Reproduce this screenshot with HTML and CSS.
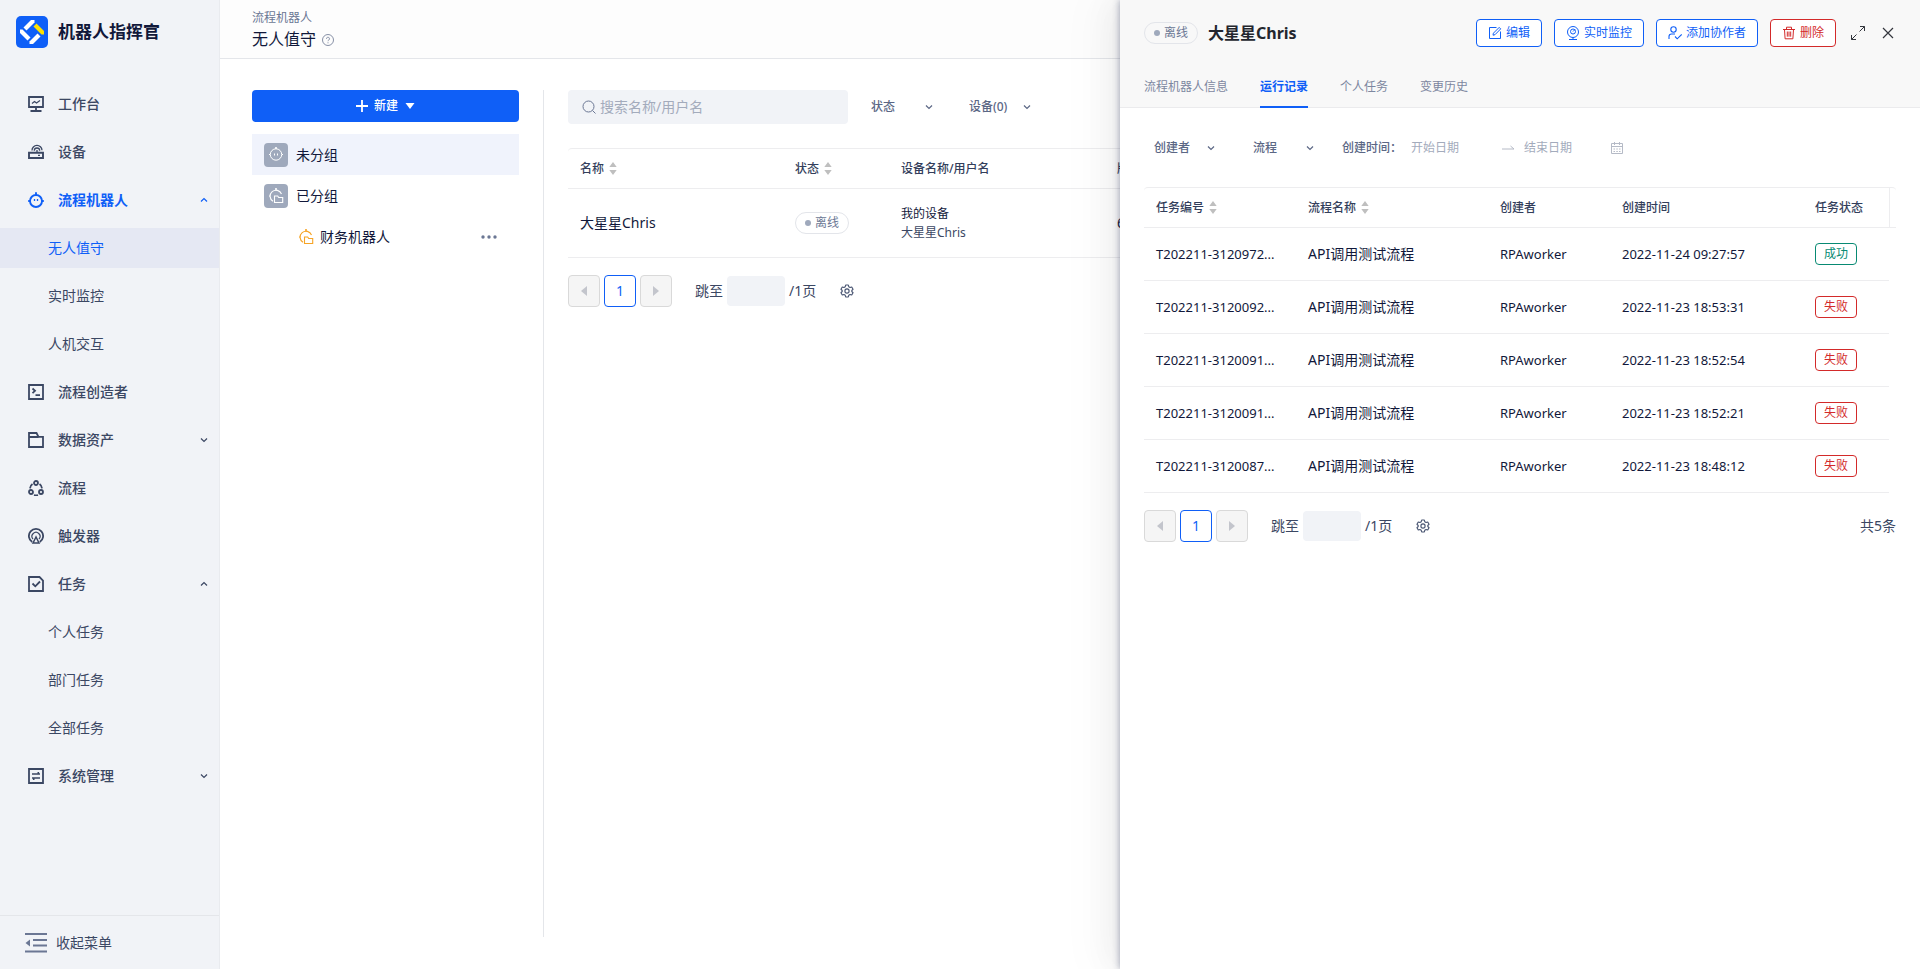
FILE: index.html
```html
<!DOCTYPE html>
<html lang="zh-CN">
<head>
<meta charset="utf-8">
<title>机器人指挥官</title>
<link rel="stylesheet" href="styles.css">
</head>
<body>
<svg class="sprite" aria-hidden="true">
  <symbol id="i-up" viewBox="0 0 8 8"><path d="M1 5.500 4 2.500l3 3" fill="none" stroke="currentColor" stroke-width="1.200"/></symbol>
  <symbol id="i-down" viewBox="0 0 8 8"><path d="M1 2.500l3 3 3-3" fill="none" stroke="currentColor" stroke-width="1.200"/></symbol>
  <symbol id="i-robot" viewBox="0 0 16 16"><g fill="none" stroke="currentColor" stroke-width="1.900"><circle cx="8" cy="9" r="6"/><path d="M8 .2V3M.2 9H2M14 9h1.800"/><path d="M6.500 7v2M9.500 7v2" stroke-width="1.300"/></g></symbol>
  <symbol id="i-robot-thin" viewBox="0 0 16 16"><g fill="none" stroke="currentColor" stroke-width="1"><circle cx="8" cy="7.500" r="5.700"/><path d="M1 7.500h1M14 7.500h1M6.500 6.500v2M9.500 6.500v2"/><path d="M8 0v2" stroke-width="1.600"/></g></symbol>
  <symbol id="i-robot-group" viewBox="0 0 16 16"><g fill="none" stroke="currentColor" stroke-width="1.100"><path d="M5 13.200A5.900 5.900 0 1 1 13.500 6M1 8h1.500"/><path d="M8 0v2.500" stroke-width="1.600"/><path d="M6.500 8h3.200l1 1.500h4v5h-8.200z"/></g></symbol>
  <symbol id="i-sort" viewBox="0 0 8 13"><path d="M4 0l3.700 5H.3zM4 13l3.700-5H.3z" fill="currentColor"/></symbol>
  <symbol id="i-left" viewBox="0 0 8 12"><path d="M7 1v10L1 6z" fill="currentColor"/></symbol>
  <symbol id="i-right" viewBox="0 0 8 12"><path d="M1 1v10l6-5z" fill="currentColor"/></symbol>
  <symbol id="i-gear" viewBox="0 0 16 16"><g fill="none" stroke="currentColor" stroke-width="1.300" stroke-linejoin="round"><path d="M6.500 1.200h3l.5 1.900 1.500.9 1.900-.6 1.500 2.600L13.500 7.400v1.200l1.400 1.400-1.500 2.600-1.900-.6-1.500.9-.5 1.900h-3L6 12.900 4.500 12l-1.900.6L1.100 10l1.400-1.400V7.400L1.100 6l1.500-2.600 1.900.6L6 3.100z"/><circle cx="8" cy="8" r="2.400"/></g></symbol>
</svg>

<div class="app">
  <aside class="sidebar">
    <div class="brand">
      <svg class="brand-logo" viewBox="0 0 32 32"><rect width="32" height="32" rx="5" fill="#0f5ff7"/><g fill="#fff"><path d="M7.500 11.500L15 4h3.500v2.500l-8 8z"/><path d="M20.500 7.500L28 15v3.500h-2.500l-8-8z" fill="#ffe100"/><path d="M24.500 20.500L17 28h-3.500v-2.500l8-8z"/><path d="M11.500 24.500L4 17v-3.500h2.500l8 8z"/></g></svg>
      <span class="brand-name">机器人指挥官</span>
    </div>
    <nav class="menu">
      <a class="item" href="#"><svg class="icon" viewBox="0 0 16 16"><g fill="none" stroke="currentColor" stroke-width="1.800"><path d="M1 1h14v10H1zM8 11v3.500M2.500 15h11"/><path d="M4 7.500l2.500-2L8.500 7 12 4.500" stroke-width="1.200"/></g></svg>工作台</a>
      <a class="item" href="#"><svg class="icon" viewBox="0 0 16 16"><g fill="none" stroke="currentColor"><path d="M1 8.800h14v5.200H1z" stroke-width="1.900"/><path d="M10 11.400h2" stroke-width="1.200"/><path d="M4 6.500a5 5 0 0 1 10-.2M6.300 6.700a2.700 2.700 0 0 1 5.400 0M9 6v2" stroke-width="1.300"/></g></svg>设备</a>
      <a class="item item-on" href="#"><svg class="icon"><use href="#i-robot"/></svg>流程机器人<svg class="fold"><use href="#i-up"/></svg></a>
      <a class="item sub sub-on" href="#">无人值守</a>
      <a class="item sub" href="#">实时监控</a>
      <a class="item sub" href="#">人机交互</a>
      <a class="item" href="#"><svg class="icon" viewBox="0 0 16 16"><g fill="none" stroke="currentColor" stroke-width="1.800"><path d="M1 1h14v14H1zM4.500 4.500l2.500 2.300-2.500 2.300M7.500 11.200H12"/></g></svg>流程创造者</a>
      <a class="item" href="#"><svg class="icon" viewBox="0 0 16 16"><path d="M1 15V1h7.500l2 3.800H15V15zM1 5h9.500" fill="none" stroke="currentColor" stroke-width="1.800"/></svg>数据资产<svg class="fold"><use href="#i-down"/></svg></a>
      <a class="item" href="#"><svg class="icon" viewBox="0 0 16 16"><g fill="none" stroke="currentColor" stroke-width="1.800"><circle cx="8" cy="3" r="2"/><circle cx="3" cy="12" r="2"/><circle cx="13" cy="12" r="2"/><path d="M4.500 4A6 6 0 0 0 2 8.300M11.500 4A6 6 0 0 1 14 8.300M6 15q2 .6 4 0"/></g></svg>流程</a>
      <a class="item" href="#"><svg class="icon" viewBox="0 0 16 16"><g fill="none" stroke="currentColor" stroke-width="1.800"><path d="M4.200 14A7.100 7.100 0 1 1 11.800 14"/><path d="M5 11a4 4 0 1 1 6 0" stroke-width="1.200"/><path d="M8 9l-3 6h6z" stroke-width="1.500"/></g></svg>触发器</a>
      <a class="item" href="#"><svg class="icon" viewBox="0 0 16 16"><path d="M1 1h10.500L15 4.500V15H1zM4.500 7.500l2.800 2.800 4.700-4.800" fill="none" stroke="currentColor" stroke-width="1.800"/></svg>任务<svg class="fold"><use href="#i-up"/></svg></a>
      <a class="item sub" href="#">个人任务</a>
      <a class="item sub" href="#">部门任务</a>
      <a class="item sub" href="#">全部任务</a>
      <a class="item" href="#"><svg class="icon" viewBox="0 0 16 16"><g fill="none" stroke="currentColor" stroke-width="1.800"><path d="M1 1h14v14H1z"/><path d="M4 6h8M4 10h8M10.300 4v2.500M5.700 9.500V12" stroke-width="1.600"/></g></svg>系统管理<svg class="fold"><use href="#i-down"/></svg></a>
    </nav>
    <button class="collapse" type="button"><svg class="collapse-icon" viewBox="0 0 22 20"><path d="M0 1h22M8 7h14M8 12.500h14M0 18.500h22" stroke="currentColor" stroke-width="1.800"/><path d="M5 6.500v7L.5 10z" fill="currentColor"/></svg>收起菜单</button>
  </aside>

  <main class="main">
    <header class="page-head">
      <div class="crumb">流程机器人</div>
      <h1 class="page-title">无人值守<svg class="help" viewBox="0 0 12 12"><g fill="none" stroke="currentColor"><circle cx="6" cy="6" r="5.500"/><path d="M4.500 4.800a1.500 1.500 0 1 1 2.300 1.200Q6 6.400 6 7.200M6 8.300v1"/></g></svg></h1>
    </header>
    <div class="content">
      <section class="groups">
        <button class="create" type="button"><svg class="plus" viewBox="0 0 12 12"><path d="M6 0v12M0 6h12" stroke="currentColor" stroke-width="1.800"/></svg>新建<svg class="caret" viewBox="0 0 10 6"><path d="M.5 0h9L5 6z" fill="currentColor"/></svg></button>
        <ul class="tree">
          <li class="node node-on"><span class="node-icon"><svg><use href="#i-robot-thin"/></svg></span>未分组</li>
          <li class="node"><span class="node-icon"><svg><use href="#i-robot-group"/></svg></span>已分组</li>
          <li class="node node-child"><svg class="folder"><use href="#i-robot-group"/></svg>财务机器人<button class="more" type="button" aria-label="更多"><svg viewBox="0 0 16 4"><g fill="currentColor"><circle cx="2" cy="2" r="1.700"/><circle cx="8" cy="2" r="1.700"/><circle cx="14" cy="2" r="1.700"/></g></svg></button></li>
        </ul>
      </section>
      <section class="list">
        <div class="toolbar">
          <label class="search"><svg viewBox="0 0 14 14"><circle cx="6.500" cy="6.500" r="5.500" fill="none" stroke="currentColor"/><path d="M10.500 10.500l3 3" stroke="currentColor"/></svg><input type="text" placeholder="搜索名称/用户名" aria-label="搜索"></label>
          <div class="pick pick-wide"><select aria-label="状态"><option>状态</option></select><svg><use href="#i-down"/></svg></div>
          <div class="pick pick-wide"><select aria-label="设备"><option>设备(0)</option></select><svg><use href="#i-down"/></svg></div>
        </div>
        <table class="grid robots">
          <colgroup><col class="c-name"><col class="c-state"><col class="c-device"><col></colgroup>
          <thead><tr><th>名称<svg class="sort"><use href="#i-sort"/></svg></th><th>状态<svg class="sort"><use href="#i-sort"/></svg></th><th>设备名称/用户名</th><th>版本</th></tr></thead>
          <tbody><tr><td>大星星Chris</td><td><span class="badge">离线</span></td><td><div class="device">我的设备</div><div class="user">大星星Chris</div></td><td>6.0.0</td></tr></tbody>
        </table>
        <div class="pager">
          <button class="page" type="button" disabled aria-label="上一页"><svg><use href="#i-left"/></svg></button>
          <button class="page page-on" type="button">1</button>
          <button class="page" type="button" disabled aria-label="下一页"><svg><use href="#i-right"/></svg></button>
          <label class="jump">跳至<input type="text" aria-label="页码">/1页</label>
          <button class="gear" type="button" aria-label="设置"><svg><use href="#i-gear"/></svg></button>
        </div>
      </section>
    </div>
  </main>

  <section class="drawer">
    <header class="drawer-head">
      <div class="drawer-bar">
        <span class="badge">离线</span>
        <h2 class="drawer-title">大星星Chris</h2>
        <div class="actions">
          <button class="action" type="button"><svg viewBox="0 0 14 14"><path d="M8.500 1.500h-7v11h11v-7M5 9.200l.4-2L11.200 1.400l1.500 1.500L7 8.700z" fill="none" stroke="currentColor"/></svg>编辑</button>
          <button class="action" type="button"><svg viewBox="0 0 14 14"><g fill="none" stroke="currentColor"><circle cx="7" cy="6" r="5.500"/><circle cx="7" cy="5.500" r="2.500"/><path d="M7 5.500l2-2M7 11.500v2M3 13.500h8"/></g></svg>实时监控</button>
          <button class="action" type="button"><svg viewBox="0 0 14 14"><g fill="none" stroke="currentColor" stroke-width="1.100"><circle cx="5.500" cy="3.500" r="2.700"/><path d="M1 13V10.500q0-2.500 2.500-2.500H7M7 10.500l2.200 2.300L13.700 8.500"/></g></svg>添加协作者</button>
          <button class="action action-danger" type="button"><svg viewBox="0 0 14 14"><path d="M1 3.500h12M4.500 3.300V1.200h5v2.100M2.500 3.500l.6 9.300h7.800l.6-9.300M5.300 5.500v5.200M7 5.500v5.200M8.700 5.500v5.200" fill="none" stroke="currentColor"/></svg>删除</button>
        </div>
        <button class="plain expand" type="button" aria-label="展开"><svg viewBox="0 0 14 14"><path d="M9 .5h4.500V5M13.500.5l-5 5M5 13.500H.5V9M.5 13.500l5-5" fill="none" stroke="currentColor"/></svg></button>
        <button class="plain" type="button" aria-label="关闭"><svg viewBox="0 0 16 16"><path d="M3 3l10 10M13 3L3 13" stroke="currentColor" stroke-width="1.200"/></svg></button>
      </div>
      <nav class="tabs">
        <a class="tab" href="#">流程机器人信息</a>
        <a class="tab tab-on" href="#">运行记录</a>
        <a class="tab" href="#">个人任务</a>
        <a class="tab" href="#">变更历史</a>
      </nav>
    </header>
    <div class="drawer-body">
      <div class="filters">
        <div class="pick"><select aria-label="创建者"><option>创建者</option></select><svg><use href="#i-down"/></svg></div>
        <div class="pick"><select aria-label="流程"><option>流程</option></select><svg><use href="#i-down"/></svg></div>
        <div class="range">
          <label for="from">创建时间：</label>
          <input id="from" type="text" placeholder="开始日期">
          <svg class="to" viewBox="0 0 12 12"><path d="M0 7h12L8.500 4" fill="none" stroke="currentColor"/></svg>
          <input type="text" placeholder="结束日期" aria-label="结束日期">
          <svg class="cal" viewBox="0 0 12 12"><path d="M.5 1.500h11v10H.5zM.5 4.500h11M3.500 0v3M8.500 0v3M2.500 7h1.500M5.300 7h1.500M8 7h1.500M2.500 9.500h1.500M5.300 9.500h1.500M8 9.500h1.500" fill="none" stroke="currentColor"/></svg>
        </div>
      </div>
      <table class="grid runs">
        <colgroup><col class="c-no"><col class="c-flow"><col class="c-by"><col class="c-time"><col><col class="c-end"></colgroup>
        <thead><tr><th>任务编号<svg class="sort"><use href="#i-sort"/></svg></th><th>流程名称<svg class="sort"><use href="#i-sort"/></svg></th><th>创建者</th><th>创建时间</th><th>任务状态</th><th class="end"></th></tr></thead>
        <tbody>
          <tr><td class="code">T202211-3120972...</td><td>API调用测试流程</td><td class="code">RPAworker</td><td class="code">2022-11-24 09:27:57</td><td><span class="tag tag-ok">成功</span></td></tr>
          <tr><td class="code">T202211-3120092...</td><td>API调用测试流程</td><td class="code">RPAworker</td><td class="code">2022-11-23 18:53:31</td><td><span class="tag">失败</span></td></tr>
          <tr><td class="code">T202211-3120091...</td><td>API调用测试流程</td><td class="code">RPAworker</td><td class="code">2022-11-23 18:52:54</td><td><span class="tag">失败</span></td></tr>
          <tr><td class="code">T202211-3120091...</td><td>API调用测试流程</td><td class="code">RPAworker</td><td class="code">2022-11-23 18:52:21</td><td><span class="tag">失败</span></td></tr>
          <tr><td class="code">T202211-3120087...</td><td>API调用测试流程</td><td class="code">RPAworker</td><td class="code">2022-11-23 18:48:12</td><td><span class="tag">失败</span></td></tr>
        </tbody>
      </table>
      <div class="pager">
        <button class="page" type="button" disabled aria-label="上一页"><svg><use href="#i-left"/></svg></button>
        <button class="page page-on" type="button">1</button>
        <button class="page" type="button" disabled aria-label="下一页"><svg><use href="#i-right"/></svg></button>
        <label class="jump">跳至<input type="text" aria-label="页码">/1页</label>
        <button class="gear" type="button" aria-label="设置"><svg><use href="#i-gear"/></svg></button>
        <span class="total">共5条</span>
      </div>
    </div>
  </section>
</div>
</body>
</html>
```

FILE: styles.css
```css
* { box-sizing: border-box; }
body {
  margin: 0;
  font: 14px/20px "Noto Sans", "Noto Sans CJK SC", sans-serif;
  color: #11183a;
  background: #fff;
}
button, input, select { font: inherit; color: inherit; margin: 0; padding: 0; border: 0; background: none; outline: 0; }
button { cursor: pointer; }
a { color: inherit; text-decoration: none; }
h1, h2, ul { margin: 0; padding: 0; list-style: none; }
svg { display: block; flex: none; }
.sprite { display: none; }

.app { display: flex; height: 100vh; overflow: hidden; position: relative; }

/* sidebar */
.sidebar { width: 220px; flex: none; display: flex; flex-direction: column; background: #f1f3f7; border-right: 1px solid #e9ebef; color: #3b4763; }
.brand { display: flex; align-items: center; gap: 10px; padding: 16px 16px 32px; }
.brand-logo { width: 32px; height: 32px; }
.brand-name { font-size: 17px; line-height: 24px; font-weight: 700; color: #11183a; }
.menu { flex: 1; display: flex; flex-direction: column; gap: 8px; padding-top: 4px; }
.item { display: flex; align-items: center; height: 40px; padding: 0 11px 0 28px; font-weight: 500; }
.icon { width: 16px; height: 16px; margin-right: 14px; }
.fold { width: 8px; height: 8px; margin-left: auto; }
.item-on { color: #0f5ff7; font-weight: 700; }
.sub { padding-left: 48px; font-weight: 400; }
.sub-on { background: #e5e8f3; color: #0f5ff7; }
.collapse { display: flex; align-items: center; gap: 9px; height: 54px; padding-left: 25px; border-top: 1px solid #e4e6ea; }
.collapse-icon { width: 22px; height: 20px; color: #6b7794; }

/* page */
.main { flex: 1; min-width: 0; display: flex; flex-direction: column; }
.page-head { padding: 8px 32px 7px; background: #fdfdfd; border-bottom: 1px solid #e4e6ea; }
.crumb { font-size: 12px; line-height: 20px; color: #6b7794; }
.page-title { display: flex; align-items: center; gap: 6px; font-size: 16px; line-height: 23px; font-weight: 400; }
.help { width: 12px; height: 12px; color: #8790a6; }
.content { flex: 1; display: flex; padding: 31px 32px 32px; }
.groups { width: 292px; flex: none; padding-right: 24px; border-right: 1px solid #e4e6ea; }
.create { display: flex; align-items: center; justify-content: center; width: 100%; height: 32px; border-radius: 4px; background: #0f5ff7; color: #fff; font-size: 12px; font-weight: 500; }
.plus { width: 12px; height: 12px; margin-right: 6px; }
.caret { width: 10px; height: 6px; margin-left: 7px; }
.tree { margin-top: 12px; }
.node { display: flex; align-items: center; gap: 8px; height: 41px; padding: 0 12px; }
.node-on { background: #f0f3fc; }
.node-icon { display: flex; align-items: center; justify-content: center; width: 24px; height: 24px; border-radius: 4px; background: #9fa9bc; color: #fff; }
.node-icon svg { width: 16px; height: 16px; }
.node-child { padding: 0 21px 0 46px; gap: 6px; }
.folder { width: 16px; height: 16px; color: #f6a426; }
.more { margin-left: auto; color: #6b7794; }
.more svg { width: 18px; height: 4px; }
.list { flex: 1; min-width: 0; padding-left: 24px; }
.toolbar { display: flex; align-items: center; gap: 13px; margin-bottom: 24px; }
.search { display: flex; align-items: center; gap: 4px; width: 280px; height: 34px; padding: 0 14px; border-radius: 4px; background: #f1f3f7; color: #6b7794; }
.search svg { width: 14px; height: 14px; }
.search input { flex: 1; min-width: 0; }
::placeholder { color: #a3abbc; opacity: 1; }
.pick { display: grid; align-items: center; width: 80px; height: 32px; padding: 0 9px 0 10px; font-size: 12px; font-weight: 500; color: #5b6785; }
.pick-wide { width: 85px; padding-right: 13px; }
.pick select, .pick svg { grid-area: 1 / 1; }
.pick select { appearance: none; width: 100%; }
.pick svg { width: 8px; height: 8px; justify-self: end; pointer-events: none; }

/* tables */
.grid { width: 100%; table-layout: fixed; border-collapse: separate; border-spacing: 0; }
.grid th, .grid td { padding: 0 12px; text-align: left; vertical-align: middle; white-space: nowrap; border-bottom: 1px solid #ededef; }
.grid th { height: 41px; font-size: 12px; font-weight: 500; color: #333e5b; border-top: 1px solid #ededef; }
.grid th:first-child { border-top-left-radius: 4px; }
.grid th:last-child { border-top-right-radius: 4px; }
.sort { display: inline-block; width: 8px; height: 13px; margin-left: 5px; vertical-align: -2px; color: #bfbfbf; }
.robots td { height: 69px; }
.runs td { height: 53px; }
.grid .code { font-size: 13px; }
.runs .end { padding: 0; border-left: 1px solid #ededef; }
.c-name { width: 215px; }
.c-state { width: 106px; }
.c-device { width: 216px; }
.c-no { width: 152px; }
.c-flow { width: 192px; }
.c-by { width: 122px; }
.c-time { width: 193px; }
.c-end { width: 7px; }
.device, .user { font-size: 12px; line-height: 19px; }
.user { color: #3b4763; }
.badge { display: inline-flex; align-items: center; gap: 4px; height: 22px; padding: 0 9px; border: 1px solid #e3e5ea; border-radius: 11px; font-size: 12px; color: #6b7794; vertical-align: middle; }
.badge::before { content: ""; width: 6px; height: 6px; border-radius: 50%; background: #9fa9bc; }
.tag { display: inline-block; height: 22px; padding: 0 8px; border: 1px solid #d32a2a; border-radius: 4px; font-size: 12px; line-height: 20px; color: #d32a2a; vertical-align: middle; }
.tag-ok { border-color: #088a73; color: #088a73; }

/* pagination */
.pager { display: flex; align-items: center; gap: 4px; margin-top: 17px; color: #3b4763; }
.page { display: flex; align-items: center; justify-content: center; width: 32px; height: 32px; border: 1px solid #d9d9d9; border-radius: 4px; background: #f5f5f5; color: #c3c5cc; }
.page svg { width: 8px; height: 12px; }
.page-on { border-color: #0f5ff7; background: #fff; color: #0f5ff7; }
.jump { display: flex; align-items: center; gap: 4px; margin-left: 19px; }
.jump input { width: 58px; height: 30px; border-radius: 4px; background: #f1f3f7; }
.gear { margin-left: 20px; color: #4a5673; }
.gear svg { width: 14px; height: 14px; }
.total { margin-left: auto; }

/* drawer over the page */
.drawer { position: absolute; top: 0; right: 0; bottom: 0; width: 800px; background: #fff; box-shadow: 0 0 7px rgba(40, 50, 90, .45), -9px 0 28px rgba(0, 0, 0, .05), -12px 0 48px 8px rgba(0, 0, 0, .03); }
.drawer-head { padding: 19px 24px 0; background: #f8f8f8; border-bottom: 1px solid #ebebed; }
.drawer-bar { display: flex; align-items: center; height: 28px; margin-bottom: 19px; }
.drawer-title { margin-left: 10px; font-size: 16px; line-height: 24px; font-weight: 700; color: #23262e; }
.actions { display: flex; gap: 12px; margin-left: auto; }
.action { display: flex; align-items: center; gap: 4px; height: 28px; padding: 0 11px; border: 1px solid #0f5ff7; border-radius: 4px; background: #fff; color: #0f5ff7; font-size: 12px; }
.action svg { width: 14px; height: 14px; }
.action-danger { border-color: #d32a2a; color: #d32a2a; }
.plain { margin-left: 15px; color: #33363d; }
.plain svg { width: 16px; height: 16px; }
.expand svg { width: 14px; height: 14px; }
.tabs { display: flex; gap: 32px; margin-bottom: -1px; font-size: 12px; color: #7d87a0; }
.tab { height: 42px; line-height: 42px; }
.tab-on { border-bottom: 2px solid #0f5ff7; color: #0f5ff7; font-weight: 700; }
.drawer-body { padding: 24px; }
.filters { display: flex; align-items: center; gap: 19px; height: 32px; margin-bottom: 23px; font-size: 12px; }
.range { display: flex; align-items: center; }
.range label { margin-right: 9px; font-weight: 500; color: #5b6785; }
.range input { width: 83px; }
.to { width: 12px; height: 12px; margin: 0 10px 0 8px; color: #b5bac6; }
.cal { width: 12px; height: 12px; margin-left: 4px; color: #b5bac6; }
```
